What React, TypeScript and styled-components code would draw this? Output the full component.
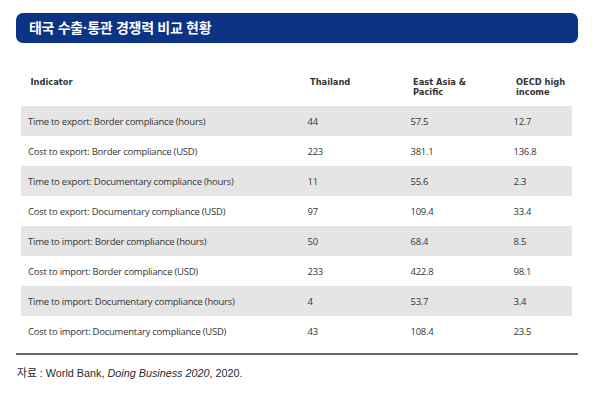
import React from "react";
import styled, { createGlobalStyle } from "styled-components";

const Global = createGlobalStyle`
  html, body { margin: 0; padding: 0; background: #ffffff; }
  body { font-family: "Open Sans", "Noto Sans CJK KR", sans-serif; }
`;

const Page = styled.div`
  width: 562px;
  padding: 12.5px 0 0 16px;
`;

const TitleBar = styled.div`
  height: 30.5px;
  border-radius: 7px;
  background: #0c3384;
  display: flex;
  align-items: center;
  padding-left: 13px;
  box-sizing: border-box;
`;

const Title = styled.h1`
  margin: 0;
  color: #ffffff;
  font-family: "Liberation Sans", "Noto Sans CJK KR", sans-serif;
  font-weight: 700;
  font-size: 14px;
  letter-spacing: -0.3px;
  line-height: 1;
`;

const Table = styled.table`
  margin: 19px 0 0 5px;
  width: 551px;
  border-collapse: collapse;
  table-layout: fixed;
`;

const HeadCell = styled.th<{ $w: number }>`
  width: ${(p) => p.$w}px;
  height: 44px;
  box-sizing: border-box;
  padding: 14.5px 4px 0 9.5px;
  vertical-align: top;
  text-align: left;
  font-family: "DejaVu Sans", sans-serif;
  font-weight: 700;
  font-size: 8.3px;
  line-height: 10.7px;
  color: #333333;
`;

const HeadLine = styled.span`
  display: block;
`;

const Row = styled.tr<{ $shade: boolean }>`
  height: 30px;
  background: ${(p) => (p.$shade ? "#e5e5e5" : "transparent")};
`;

const Cell = styled.td`
  padding: 1.5px 4px 0 7px;
  vertical-align: middle;
  font-family: "Open Sans", sans-serif;
  font-size: 9.5px;
  letter-spacing: -0.25px;
  color: #353535;
  white-space: nowrap;
`;

const Rule = styled.div`
  margin-top: 7px;
  height: 2px;
  background: #666666;
`;

const Source = styled.p`
  margin: 10.5px 0 0 1px;
  font-family: "Liberation Sans", "Noto Sans CJK KR", sans-serif;
  font-size: 10.8px;
  line-height: 14px;
  color: #2a2a2a;
`;

const cols = [
  { label: ["Indicator"], w: 279.5 },
  { label: ["Thailand"], w: 103 },
  { label: ["East Asia &", "Pacific"], w: 103 },
  { label: ["OECD high", "income"], w: 65.5 },
];

const rows: [string, string, string, string][] = [
  ["Time to export: Border compliance (hours)", "44", "57.5", "12.7"],
  ["Cost to export: Border compliance (USD)", "223", "381.1", "136.8"],
  ["Time to export: Documentary compliance (hours)", "11", "55.6", "2.3"],
  ["Cost to export: Documentary compliance (USD)", "97", "109.4", "33.4"],
  ["Time to import: Border compliance (hours)", "50", "68.4", "8.5"],
  ["Cost to import: Border compliance (USD)", "233", "422.8", "98.1"],
  ["Time to import: Documentary compliance (hours)", "4", "53.7", "3.4"],
  ["Cost to import: Documentary compliance (USD)", "43", "108.4", "23.5"],
];

export default function App() {
  return (
    <>
      <Global />
      <Page>
        <TitleBar>
          <Title>태국 수출·통관 경쟁력 비교 현황</Title>
        </TitleBar>
        <Table>
          <thead>
            <tr>
              {cols.map((c) => (
                <HeadCell key={c.label[0]} $w={c.w}>
                  {c.label.map((l) => (
                    <HeadLine key={l}>{l}</HeadLine>
                  ))}
                </HeadCell>
              ))}
            </tr>
          </thead>
          <tbody>
            {rows.map((r, i) => (
              <Row key={r[0]} $shade={i % 2 === 0}>
                {r.map((v, j) => (
                  <Cell key={j}>{v}</Cell>
                ))}
              </Row>
            ))}
          </tbody>
        </Table>
        <Rule />
        <Source>
          자료 : World Bank, <i>Doing Business 2020</i>, 2020.
        </Source>
      </Page>
    </>
  );
}
